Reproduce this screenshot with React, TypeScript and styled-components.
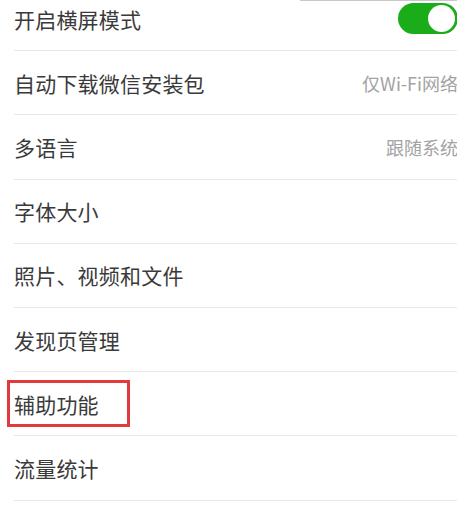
import React from "react";
import styled, { createGlobalStyle } from "styled-components";

const GlobalStyle = createGlobalStyle`
  html, body {
    margin: 0;
    padding: 0;
    background: #fff;
    overflow: hidden;
  }
  body {
    font-family: "Noto Sans CJK SC", "Noto Sans", sans-serif;
  }
`;

const Page = styled.div`
  position: relative;
  width: 457px;
  height: 507px;
  overflow: hidden;
  background: #fff;
`;

const TopEdge = styled.div`
  position: absolute;
  top: 0;
  left: 300px;
  right: 0;
  height: 1px;
  background: #c8c8c8;
`;

const List = styled.div`
  display: flex;
  flex-direction: column;
  margin-top: -13px;
  padding-left: 14px;
`;

const Row = styled.div`
  position: relative;
  display: flex;
  align-items: center;
  justify-content: space-between;
  height: 64.2px;
  border-bottom: 1px solid #e8e8e8;
  box-sizing: border-box;
`;

const Label = styled.span`
  font-size: 21px;
  color: #3a3a3a;
  letter-spacing: 0.2px;
`;

const Value = styled.span`
  font-size: 18px;
  color: #a3a3a3;
  margin-right: -1px;
`;

const Track = styled.div<{ $on: boolean }>`
  width: 60px;
  height: 31px;
  border-radius: 16px;
  background: ${(p) => (p.$on ? "#1aad19" : "#e5e5e5")};
  display: flex;
  align-items: center;
  justify-content: ${(p) => (p.$on ? "flex-end" : "flex-start")};
  padding: 0 3px;
  box-sizing: border-box;
  margin-right: -1px;
`;

const Knob = styled.div`
  width: 27px;
  height: 27px;
  border-radius: 50%;
  background: #fff;
`;

const Highlight = styled.div`
  position: absolute;
  left: -7px;
  top: 8px;
  width: 123px;
  height: 47px;
  border: 3px solid #e2393d;
  box-sizing: border-box;
  pointer-events: none;
`;

interface Item {
  label: string;
  value?: string;
  toggle?: boolean;
  marked?: boolean;
}

const items: Item[] = [
  { label: "开启横屏模式", toggle: true },
  { label: "自动下载微信安装包", value: "仅Wi-Fi网络" },
  { label: "多语言", value: "跟随系统" },
  { label: "字体大小" },
  { label: "照片、视频和文件" },
  { label: "发现页管理" },
  { label: "辅助功能", marked: true },
  { label: "流量统计" },
];

const App: React.FC = () => {
  return (
    <Page>
      <GlobalStyle />
      <List>
        {items.map((item) => (
          <Row key={item.label}>
            <Label>{item.label}</Label>
            {item.value && <Value>{item.value}</Value>}
            {item.toggle && (
              <Track $on>
                <Knob />
              </Track>
            )}
            {item.marked && <Highlight />}
          </Row>
        ))}
      </List>
      <TopEdge />
    </Page>
  );
};

export default App;
